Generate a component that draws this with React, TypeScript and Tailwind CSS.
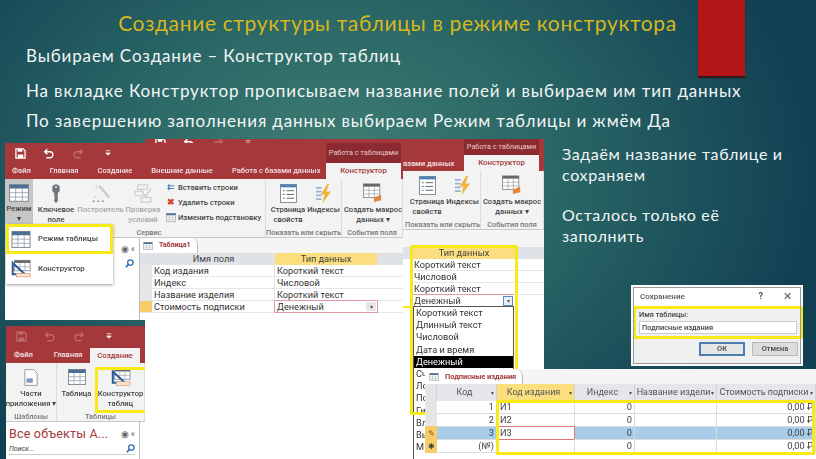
import type { ReactNode } from "react";

const uiFont = "font-['Roboto',sans-serif] blur-[0.3px]";

function GridIcon({ className = "w-[18px] h-[16px]" }: { className?: string }) {
  return (
    <svg viewBox="0 0 18 16" className={className}>
      <rect x="0.5" y="0.5" width="17" height="15" fill="#fff" stroke="#8a8f96" />
      <rect x="0.5" y="0.5" width="17" height="3.5" fill="#4d6f96" />
      <path d="M6 4v11.5M12 4v11.5M.5 7.7h17M.5 11.6h17" stroke="#9aa3ad" strokeWidth="0.8" />
    </svg>
  );
}

function DesignIcon({ className = "w-[23px] h-[22px]" }: { className?: string }) {
  return (
    <svg viewBox="0 0 23 22" className={className}>
      <rect x="4" y="1" width="18" height="12" fill="#fff" stroke="#8a8f96" />
      <rect x="4" y="1" width="18" height="3" fill="#666" />
      <path d="M10 4v9M16 4v9M4 8.5h18" stroke="#9aa3ad" strokeWidth="0.8" />
      <path d="M2 4l14 13H2z" fill="none" stroke="#2c5c9c" strokeWidth="2.4" />
      <rect x="6" y="16" width="16" height="4" fill="#fbe6d3" stroke="#d99a6c" strokeWidth="0.8" />
    </svg>
  );
}

function KeyIcon() {
  return (
    <svg viewBox="0 0 12 22" className="w-[12px] h-[20px]">
      <path d="M2 3.5Q6-.5 10 3.5V9L8 11v9l-2 2-2-2v-2l1-1-1-1 1-1-1-1v-3L2 9z" fill="#6f767c" />
      <circle cx="6" cy="4.5" r="1.2" fill="#d8d8d8" />
    </svg>
  );
}

function BuilderIcon() {
  return (
    <svg viewBox="0 0 22 22" className="w-[20px] h-[20px]">
      <path d="M9 3l11 13" stroke="#c9c9c9" strokeWidth="2.4" />
      <path d="M6 2v5M3.5 4.5h5" stroke="#dcdcdc" strokeWidth="1" />
      <path d="M2 20h2M7 20h2M12 20h2M4 15h1" stroke="#8f8f8f" strokeWidth="1.6" />
    </svg>
  );
}

function CheckIcon() {
  return (
    <svg viewBox="0 0 22 22" className="w-[20px] h-[20px]">
      <path d="M5 2h11v5H5zM2 9h9v5H2zM9 16h11v5H9z" fill="#f1f1f1" stroke="#c4c4c4" />
      <path d="M11 11l3 4 6-9" fill="none" stroke="#cfcfcf" strokeWidth="1.6" />
    </svg>
  );
}

function PageIcon() {
  return (
    <svg viewBox="0 0 18 20" className="w-[17px] h-[19px]">
      <rect x="0.5" y="0.5" width="17" height="19" fill="#fff" stroke="#7c8a99" />
      <rect x="0.5" y="0.5" width="17" height="3" fill="#4e7fb5" />
      <path d="M3 7h2M7 7h8M3 11h2M7 11h8M3 15h2M7 15h8" stroke="#55606b" strokeWidth="1" />
    </svg>
  );
}

function BoltIcon() {
  return (
    <svg viewBox="0 0 18 20" className="w-[17px] h-[19px]">
      <path d="M1 4h6M1 8h6M1 12h6M1 16h6" stroke="#9bb3cc" strokeWidth="2" />
      <path d="M13 0L6 11h4l-2 9 9-12h-5l3-8z" fill="#f0b23c" />
    </svg>
  );
}

function MacroIcon() {
  return (
    <svg viewBox="0 0 22 22" className="w-[20px] h-[20px]">
      <rect x="0.5" y="1" width="18" height="15" fill="#fff" stroke="#8a8f96" />
      <rect x="0.5" y="1" width="18" height="3" fill="#666" />
      <path d="M6.5 4v12M12.5 4v12M.5 8h18M.5 12h18" stroke="#9aa3ad" strokeWidth="0.8" />
      <path d="M12 16l8-3v6l-8 2z" fill="#e4853a" />
    </svg>
  );
}

function SearchIcon() {
  return (
    <svg viewBox="0 0 10 10" className="w-[9px] h-[9px]">
      <circle cx="6" cy="4" r="3" fill="none" stroke="#2c6cab" strokeWidth="1.4" />
      <path d="M4 6L1 9" stroke="#2c6cab" strokeWidth="1.8" />
    </svg>
  );
}

function Big({ icon, lines, dim, w, active }: { icon: ReactNode; lines: string[]; dim?: boolean; w: string; active?: boolean }) {
  return (
    <div className={`flex flex-col items-center shrink-0 pt-[3px] ${w} ${active ? "bg-[#c6c6c6] h-[45px]" : ""}`}>
      <div className="h-[22px] flex items-center">{icon}</div>
      <div className={`mt-[1px] text-[7.6px] leading-[10px] font-medium text-center whitespace-nowrap ${dim ? "text-[#a8a8a8]" : "text-[#444]"}`}>
        {lines.map((l) => (
          <div key={l}>{l}</div>
        ))}
      </div>
    </div>
  );
}

function Group({ label, w, children }: { label: string; w: string; children: ReactNode }) {
  return (
    <div className={`flex flex-col shrink-0 border-r border-[#dcdcdc] ${w}`}>
      <div className="flex h-[49px]">{children}</div>
      <div className="text-[7.4px] leading-[9px] font-medium text-[#777] text-center whitespace-nowrap">{label}</div>
    </div>
  );
}

function ShowGroup() {
  return (
    <Group label="Показать или скрыть" w="w-[76px]">
      <Big icon={<PageIcon />} lines={["Страница", "свойств"]} w="w-[40px] ml-[2px]" />
      <Big icon={<BoltIcon />} lines={["Индексы"]} w="w-[31px]" />
    </Group>
  );
}

function MacroGroup({ w }: { w: string }) {
  return (
    <Group label="События поля" w={w}>
      <Big icon={<MacroIcon />} lines={["Создать макрос", "данных ▾"]} w="w-[58px] ml-[2px]" />
    </Group>
  );
}

function Row({ icon, text }: { icon: ReactNode; text: string }) {
  return (
    <div className="flex items-center gap-[2px] h-[15px] text-[7.6px] font-medium text-[#444] whitespace-nowrap">
      <span className="w-[11px] flex justify-center">{icon}</span>
      {text}
    </div>
  );
}

function QuickBar({ faded }: { faded?: boolean }) {
  const c = faded ? "#c06a6c" : "#fff";
  return (
    <div className="h-[20px] flex items-center gap-[17px] pl-[10px]">
      <svg viewBox="0 0 12 12" className="w-[11px] h-[11px]">
        <path d="M1 1h8l2 2v8H1z" fill="none" stroke={c} strokeWidth="1.4" />
        <path d="M3 1h5v3H3zM3 7h6v4H3z" fill={c} />
      </svg>
      <svg viewBox="0 0 14 12" className="w-[12px] h-[11px]">
        <path d="M2 4h6a3.5 3.5 0 0 1 0 7H4M5 1L2 4l3 3" fill="none" stroke={c} strokeWidth="1.6" />
      </svg>
      <svg viewBox="0 0 14 12" className="w-[12px] h-[11px]">
        <path d="M12 4H6a3.5 3.5 0 0 0 0 7h4M9 1l3 3-3 3" fill="none" stroke={faded ? "#c06a6c" : "#bf6c6e"} strokeWidth="1.6" />
      </svg>
      <svg viewBox="0 0 8 8" className="w-[6px] h-[8px] ml-[4px]">
        <path d="M1 1h6M1 4l3 3 3-3z" stroke="#fff" fill="#fff" />
      </svg>
    </div>
  );
}

function RedTab({ children }: { children: ReactNode }) {
  return <div className="shrink-0 text-[7.6px] leading-[12px] font-medium text-[#f6e3e3] whitespace-nowrap">{children}</div>;
}

function ContextTab({ h }: { h: string }) {
  return (
    <div className={`flex flex-col w-[75px] ${h}`}>
      <div className="flex-1 bg-[#8b2b2f] flex items-center justify-center text-[7.3px] text-[#e9c9ca] whitespace-nowrap">Работа с таблицами</div>
      <div className="h-[16px] bg-[#f3f3f3] text-[7.8px] leading-[16px] font-medium text-center text-[#a5383b]">Конструктор</div>
    </div>
  );
}

function FieldTable() {
  const rows = [
    ["Код издания", "Короткий текст"],
    ["Индекс", "Числовой"],
    ["Название изделия", "Короткий текст"],
    ["Стоимость подписки", "Денежный"],
  ];
  return (
    <div className="flex flex-col h-full bg-white">
      <div className="h-[15px] bg-[#f5f5f5] flex shrink-0">
        <div className="w-[58px] flex items-center gap-[6px] pl-[3px] text-[7px] font-bold text-[#a4373a] bg-white border-r border-[#bbb] rounded-tr-[6px]">
          <GridIcon className="w-[10px] h-[8px]" />
          Таблица1
        </div>
      </div>
      <div className="flex h-[12px] shrink-0 text-[9.2px] leading-[12px] text-[#444] text-center">
        <div className="w-[12px] bg-[#dfe3e7]" />
        <div className="w-[123px] bg-[#dfe3e7]">Имя поля</div>
        <div className="w-[102px] bg-[#fbdf7f]">Тип данных</div>
        <div className="flex-1 bg-[#dfe3e7]" />
      </div>
      <div className="text-[9.2px] leading-[12px] text-[#333]">
        {rows.map(([n, t], i) => (
          <div key={n} className="flex h-[12px] border-b border-[#e4e8ee]">
            <div className={`w-[12px] shrink-0 ${i === 3 ? "bg-[#f6cd6a]" : "bg-[#e4e6e9]"}`} />
            <div className="w-[123px] shrink-0 pl-[2px] border-r border-[#e4e8ee]">{n}</div>
            <div className={`w-[102px] shrink-0 pl-[2px] relative ${i === 3 ? "outline outline-[#e39aa0]" : ""}`}>
              {t}
              {i === 3 && <span className="absolute right-[1px] top-[1px] w-[10px] h-[9px] bg-[#e6e6e6] text-[6px] leading-[9px] text-center text-[#555]">▾</span>}
            </div>
          </div>
        ))}
      </div>
    </div>
  );
}

function NavStub() {
  return (
    <div className="w-[135px] shrink-0 border-r border-[#bbb] bg-white flex flex-col items-end pr-[4px] pt-[5px]">
      <div className="text-[9px] leading-[12px] text-[#666]">◉ «</div>
      <div className="mt-[4px] mr-[1px]">
        <SearchIcon />
      </div>
    </div>
  );
}

function WindowA() {
  return (
    <div className={`absolute left-[5px] top-[143px] w-[398px] h-[177px] flex flex-col ${uiFont}`}>
      <div className="h-[36px] bg-[#a5383b] relative shrink-0">
        <QuickBar />
        <div className="flex h-[16px] pl-[7px] gap-[19px] items-center">
          <RedTab>Файл</RedTab>
          <RedTab>Главная</RedTab>
          <RedTab>Создание</RedTab>
          <RedTab>Внешние данные</RedTab>
          <RedTab>Работа с базами данных</RedTab>
        </div>
        <div className="absolute left-[321px] top-0">
          <ContextTab h="h-[36px]" />
        </div>
      </div>
      <div className="flex h-[59px] bg-[#f3f3f3] shrink-0 border-b border-[#c8c8c8] overflow-hidden">
        <Big icon={<GridIcon className="w-[20px] h-[18px]" />} lines={["Режим", "▾"]} active w="w-[28px]" />
        <Group label="Сервис" w="w-[233px]">
          <Big icon={<KeyIcon />} lines={["Ключевое", "поле"]} w="w-[40px] ml-[3px]" />
          <Big icon={<BuilderIcon />} lines={["Построитель"]} dim w="w-[49px]" />
          <Big icon={<CheckIcon />} lines={["Проверка", "условий"]} dim w="w-[36px]" />
          <div className="flex flex-col pt-[1px] pl-[4px]">
            <Row icon={<span className="text-[#2c6cab] text-[9px] leading-none">⇇</span>} text="Вставить строки" />
            <Row icon={<span className="text-[#d2442c] text-[9px] leading-none font-bold">✖</span>} text="Удалить строки" />
            <Row icon={<GridIcon className="w-[10px] h-[9px]" />} text="Изменить подстановку" />
          </div>
        </Group>
        <ShowGroup />
        <MacroGroup w="w-[61px] overflow-hidden" />
      </div>
      <div className="flex flex-1 min-h-0">
        <NavStub />
        <div className="flex-1">
          <FieldTable />
        </div>
      </div>
      <div className="absolute left-[1px] top-[81px] w-[107px] h-[60px] bg-white shadow-[0_1px_3px_rgba(0,0,0,0.4)] text-[7.8px] font-medium text-[#444] flex flex-col whitespace-nowrap">
        <div className="h-[30px] border-[3px] border-[#f7ea17] flex items-center gap-[7px] pl-[2px]">
          <GridIcon className="w-[20px] h-[17px]" />
          <span>Режим таблицы</span>
        </div>
        <div className="flex-1 flex items-center gap-[7px] pl-[5px]">
          <DesignIcon className="w-[20px] h-[20px]" />
          <span>Конструктор</span>
        </div>
      </div>
    </div>
  );
}

function WindowB() {
  const top = ["Короткий текст", "Числовой", "Короткий текст"];
  return (
    <div className={`absolute left-[145px] top-[139px] w-[399px] h-[320px] bg-white flex flex-col ${uiFont}`}>
      <div className="h-[32px] bg-[#a5383b] relative shrink-0 overflow-hidden">
        <div className="-mt-[6px]">
          <QuickBar />
        </div>
        <div className="absolute right-[5px] top-0">
          <ContextTab h="h-[32px]" />
        </div>
        <div className="absolute left-[258px] top-[19px] text-[7.6px] leading-[12px] font-medium text-[#f6e3e3] whitespace-nowrap">азами данных</div>
      </div>
      <div className="flex pl-[260px] h-[59px] bg-[#f3f3f3] shrink-0 border-b border-[#c8c8c8] overflow-hidden">
        <ShowGroup />
        <MacroGroup w="w-[63px] overflow-hidden" />
      </div>
      <div className="h-[17px] bg-[#f5f5f5] shrink-0" />
      <div className="flex h-[12px] shrink-0 text-[9.2px] leading-[12px] text-[#444] text-center">
        <div className="flex-1 bg-[#dfe3e7]" />
        <div className="w-[104px] bg-[#fbdf7f]">Тип данных</div>
        <div className="w-[28px] bg-[#dfe3e7]" />
      </div>
      <div className="ml-[267px] text-[9.2px] leading-[12px] text-[#333]">
        {top.map((t, i) => (
          <div key={i} className="h-[12px] pl-[2px] border-b border-[#e4e8ee]">{t}</div>
        ))}
        <div className="relative h-[12px] w-[102px] pl-[2px] border-t border-[#e39aa0] -mt-[1px]">
          Денежный
          <span className="absolute right-[1px] top-[1px] w-[10px] h-[10px] border border-[#5a8fc4] bg-[#e8f0f8] text-[6px] leading-[8px] text-center text-[#555]">▾</span>
        </div>
      </div>
      <div className="ml-[268px] w-[101px] border border-[#555] text-[9.2px] leading-[12.2px] text-[#333] bg-white pl-[2px] pb-[6px]">
        {["Короткий текст", "Длинный текст", "Числовой", "Дата и время"].map((t) => (
          <div key={t}>{t}</div>
        ))}
        <div className="bg-black text-white -ml-[2px] pl-[2px]">Денежный</div>
        {["Сч", "Ло", "По", "Ги", "Вл", "Вь", "М"].map((t) => (
          <div key={t} className="whitespace-nowrap">{t}</div>
        ))}
      </div>
      <div className="absolute left-[265px] top-[106px] w-[108px] h-[170px] border-[3px] border-[#f7ea17]" />
      <div className="absolute left-[258px] top-[167px] w-[8px] h-[2px] bg-[#f7ea17]" />
    </div>
  );
}

function WindowD() {
  return (
    <div className={`absolute left-[6px] top-[326px] w-[139px] h-[133px] bg-white flex flex-col ${uiFont}`}>
      <div className="h-[37px] bg-[#a5383b] shrink-0 relative overflow-hidden">
        <QuickBar faded />
        <div className="flex h-[17px] pl-[8px] gap-[21px] items-center">
          <RedTab>Файл</RedTab>
          <RedTab>Главная</RedTab>
        </div>
        <div className="absolute left-[84px] top-[22px] w-[50px] h-[15px] bg-[#f3f3f3] text-[#a5383b] text-[7.8px] leading-[15px] font-medium text-center">Создание</div>
      </div>
      <div className="h-[59px] bg-[#f3f3f3] shrink-0 flex border-b border-[#c8c8c8] relative">
        <Group label="Шаблоны" w="w-[51px]">
          <Big
            icon={
              <svg viewBox="0 0 16 20" className="w-[14px] h-[19px]">
                <path d="M1 1h10l4 4v14H1z" fill="#fff" stroke="#8a8f96" />
                <rect x="3" y="11" width="7" height="5" fill="#7d98b8" />
              </svg>
            }
            lines={["Части", "приложения ▾"]}
            w="w-[50px]"
          />
        </Group>
        <Group label="Таблицы" w="w-[88px]">
          <Big icon={<GridIcon className="w-[18px] h-[16px]" />} lines={["Таблица"]} w="w-[39px]" />
          <Big icon={<DesignIcon className="w-[20px] h-[19px]" />} lines={["Конструктор", "таблиц"]} w="w-[49px]" />
        </Group>
        <div className="absolute left-[89px] top-[4px] w-[50px] h-[46px] border-[3px] border-r-0 border-[#f7ea17]" />
      </div>
      <div className="w-[134px] flex-1 border-r border-[#bbb] pt-[4px] pl-[3px] pr-[4px]">
        <div className="flex h-[16px] items-center justify-between">
          <span className="text-[12.5px] leading-[16px] tracking-[0.2px] text-[#a5383b] whitespace-nowrap">Все объекты А...</span>
          <span className="text-[9px] leading-[12px] text-[#666]">◉ «</span>
        </div>
        <div className="mt-[1px] flex h-[12px] items-center justify-between border-b border-[#ccc] text-[7px] leading-[10px] italic text-[#444]">
          Поиск...
          <SearchIcon />
        </div>
      </div>
    </div>
  );
}

const tableCols = "grid-cols-[12px_60px_78px_60px_82px_99px]";

function DataRow({ id, code, sel, mark }: { id: string; code: string; sel?: boolean; mark?: ReactNode }) {
  const cell = "border-r border-b border-[#dcdcdc] px-[2px] text-right";
  return (
    <div className={`grid ${tableCols} h-[13px] text-[9.2px] leading-[13px] text-[#444] ${sel ? "bg-[#a8cdea]" : ""}`}>
      <div className={`flex items-center justify-center text-[8px] ${mark ? "bg-[#f6cd6a]" : "bg-[#e4e6e9]"}`}>{mark}</div>
      <div className={cell}>{id}</div>
      <div className={`${cell} !text-left pl-[3px] ${sel ? "bg-white outline outline-[#e2747c] -outline-offset-1" : ""}`}>{code}</div>
      <div className={cell}>0</div>
      <div className={cell} />
      <div className={cell}>0,00 ₽</div>
    </div>
  );
}

function TableC() {
  return (
    <div className={`absolute left-[425px] top-[369px] w-[391px] h-[90px] bg-white overflow-hidden ${uiFont}`}>
      <div className="h-[15px] bg-[#f5f5f5] flex">
        <div className="w-[98px] pl-[4px] flex items-center gap-[6px] bg-white border-r border-[#bbb] rounded-tr-[8px] text-[7.4px] font-bold text-[#a5383b] whitespace-nowrap">
          <GridIcon className="w-[10px] h-[8px]" />
          Подписные издания
        </div>
      </div>
      <div className={`grid ${tableCols} h-[16px] text-[9px] leading-[17px] text-[#555] border-b border-[#ccc]`}>
        {["", "Код", "Код издания", "Индекс", "Название издели", "Стоимость подписки"].map((h, i) => (
          <div key={h} className={`flex justify-between pl-[1px] pr-[2px] border-r border-[#cfd3d8] whitespace-nowrap ${i === 2 ? "bg-[#fbdf7f]" : "bg-[#e4e6e9]"}`}>
            <span className="mx-auto">{h}</span>
            {i > 0 && <span className="text-[6px]">▾</span>}
          </div>
        ))}
      </div>
      <DataRow id="1" code="И1" />
      <DataRow id="2" code="И2" />
      <DataRow id="3" code="И3" sel mark={<span className="text-[#8a5a00]">✎</span>} />
      <DataRow id="(№)" code="" mark={<span>✱</span>} />
      <div className="absolute left-[71px] top-[31px] w-[319px] h-[55px] border-[3px] border-[#f7ea17]" />
    </div>
  );
}

function SaveDialog() {
  return (
    <div className={`absolute left-[631px] top-[285px] w-[172px] h-[81px] bg-[#f0f0f0] border-[3px] border-[#fafafa] outline outline-[#999] -outline-offset-3 flex flex-col ${uiFont}`}>
      <div className="h-[18px] flex items-center pl-[6px] pr-[8px] text-[8px] font-medium text-[#555] bg-white shrink-0">
        <span className="flex-1">Сохранение</span>
        <span className="mr-[20px] font-bold text-[9px]">?</span>
        <span className="text-[11px]">✕</span>
      </div>
      <div className="border-[3px] border-[#f7ea17] -mx-[1px] -mr-[3px] h-[33px] px-[3px] shrink-0">
        <div className="text-[7.4px] leading-[12px] font-medium text-[#444]">Имя таблицы:</div>
        <div className="h-[13px] bg-white border border-[#ccc] text-[7.4px] leading-[11px] font-medium text-[#444] pl-[2px]">Подписные издания</div>
      </div>
      <div className="flex justify-end gap-[7px] pr-[2px] pt-[3px] text-[7.4px] font-medium text-[#444]">
        <div className="w-[46px] h-[14px] bg-[#e6e6e6] border-2 border-[#4a7db0] text-center leading-[10px]">ОК</div>
        <div className="w-[46px] h-[14px] bg-[#dcdcdc] border border-[#bbb] text-center leading-[12px]">Отмена</div>
      </div>
    </div>
  );
}

export default function App() {
  return (
    <div className="relative w-[816px] h-[459px] overflow-hidden bg-[radial-gradient(ellipse_480px_360px_at_335px_175px,#417f74_0%,#2a6766_45%,#124053_100%)] font-['Lato',sans-serif]">
      <div className="absolute left-[698px] top-0 w-[47px] h-[76px] bg-[#b21616] shadow-[0_2px_1px_rgba(60,10,10,0.8)]" />
      <h1 className="pt-[6px] text-center text-[21px] leading-[34px] tracking-[0.65px] text-[#d6b720] pr-[21px]">Создание структуры таблицы в режиме конструктора</h1>
      <div className="pl-[26px] text-[#f2f6f5] text-[17px] leading-[30px] tracking-[0.86px]">
        <p className="mt-[1px]">Выбираем Создание – Конструктор таблиц</p>
        <p className="mt-[5px]">На вкладке Конструктор прописываем название полей и выбираем им тип данных</p>
        <p>По завершению заполнения данных выбираем Режим таблицы и жмём Да</p>
      </div>
      <WindowB />
      <WindowA />
      <WindowD />
      <div className="absolute left-[562px] top-[143px] w-[230px] text-[16px] leading-[21px] tracking-[0.65px] text-[#f2f6f5]">
        <p>Задаём название таблице и сохраняем</p>
        <p className="mt-[19px]">Осталось только её заполнить</p>
      </div>
      <TableC />
      <SaveDialog />
    </div>
  );
}
